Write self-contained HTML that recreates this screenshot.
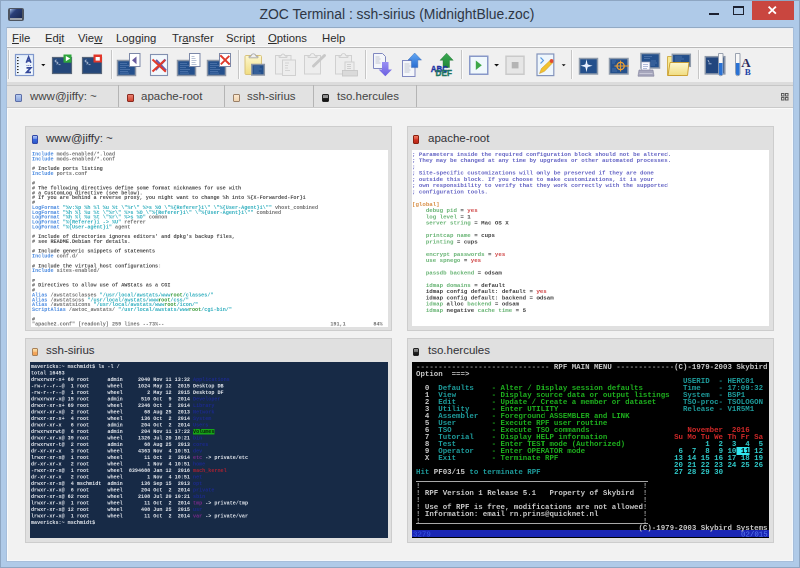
<!DOCTYPE html>
<html><head><meta charset="utf-8">
<style>
*{box-sizing:border-box}
html,body{margin:0;padding:0}
body{width:800px;height:568px;position:relative;overflow:hidden;background:#afcae8;font-family:"Liberation Sans",sans-serif}
.a{position:absolute}
.title{left:259.5px;top:4px;white-space:nowrap;font-size:13.92px;color:#2e3644;line-height:20px}
.menu span{position:absolute;top:30.5px;font-size:11.3px;line-height:14px;color:#2c2c2c}
.menu u{text-decoration:underline;text-underline-offset:1px;text-decoration-thickness:1px}
.sep{position:absolute;top:51px;width:1px;height:27px;background:#c8c8c8;border-right:1px solid #fafafa}
.tab{position:absolute;top:85px;height:22px;border-right:1px solid #b4b4b4}
.tab span{position:absolute;top:4px;font-size:11.5px;line-height:14px;color:#444}
.tic{position:absolute;top:9px;width:6.5px;height:8px;border-radius:1px}
.panel{position:absolute;background:#e0e0e0;border:1px solid #cdcdcd}
.ptitle{position:absolute;font-size:11.5px;line-height:14px;color:#303036}
.term{position:absolute;overflow:hidden;font-family:"Liberation Mono",monospace;white-space:pre}
.term div{height:auto}
</style></head><body>
<!-- title bar -->
<div class="a" style="left:0;top:0;width:800px;height:568px;border:1px solid #8ea6c2"></div>
<div class="a" style="left:8px;top:7.5px;width:15.5px;height:13.5px;background:#4e5560;border-radius:2px"></div>
<div class="a" style="left:9.5px;top:9px;width:12.5px;height:8.5px;background:linear-gradient(135deg,#c8d8f0 0,#7890c0 12%,#2a3e78 35%,#1a2850 100%)"></div>
<div class="a" style="left:9.5px;top:17.5px;width:12.5px;height:2px;background:#a0a4ac"></div>
<div class="a title">ZOC Terminal : ssh-sirius (MidnightBlue.zoc)</div>
<div class="a" style="left:709px;top:13px;width:10px;height:2px;background:#1c2130"></div>
<div class="a" style="left:733px;top:6px;width:11px;height:9px;border:1px solid #1c2130;border-top-width:2px"></div>
<div class="a" style="left:752px;top:1px;width:42px;height:19px;background:#c9463f"></div>
<svg class="a" style="left:760px;top:0px" width="24" height="20" viewBox="760 0 24 20"><path d="M768.6 6.6 L775.9 13.6 M775.9 6.6 L768.6 13.6" stroke="#fff" stroke-width="1.9"/></svg>

<!-- client -->
<div class="a" style="left:6px;top:27px;width:788px;height:535px;border:1px solid #a6bedb"></div><div class="a" style="left:7px;top:27px;width:786px;height:1px;background:#92aac4"></div>
<div class="a" style="left:7px;top:28px;width:786px;height:533px;background:#f2f2f2"></div>
<div class="a" style="left:792px;top:28px;width:1px;height:533px;background:#f4f8fc"></div>
<div class="a" style="left:7px;top:560px;width:786px;height:1px;background:#f4f8fc"></div>
<div class="a" style="left:7px;top:108px;width:1px;height:453px;background:#fafbfc"></div>
<div class="a" style="left:7px;top:28px;width:786px;height:19px;background:#f0f0f0"></div>
<div class="a" style="left:7px;top:28px;width:786px;height:1px;background:#eaeef4"></div>
<!-- menu -->
<div class="menu">
<span style="left:12px"><u>F</u>ile</span>
<span style="left:45px">Ed<u>i</u>t</span>
<span style="left:78px">Vie<u>w</u></span>
<span style="left:116px">Lo<u>g</u>ging</span>
<span style="left:172px">Tr<u>a</u>nsfer</span>
<span style="left:226px">Scrip<u>t</u></span>
<span style="left:268px"><u>O</u>ptions</span>
<span style="left:322px">Help</span>
</div>
<div class="a" style="left:7px;top:46px;width:786px;height:1px;background:#fafafa"></div>
<div class="a" style="left:7px;top:47px;width:786px;height:1px;background:#b8b8b8"></div>
<!-- toolbar -->
<div class="a" style="left:7px;top:48px;width:786px;height:34px;background:#f0f0f0"></div>
<div class="a" style="left:7px;top:81.5px;width:786px;height:3.5px;background:#dcdcdc"></div>
<svg class="a" style="left:0;top:0" width="800" height="84" viewBox="0 0 800 84">
<defs>
<linearGradient id="gy" x1="0" y1="0" x2="0" y2="1"><stop offset="0" stop-color="#fdf8d0"/><stop offset="1" stop-color="#f0dc80"/></linearGradient>
<linearGradient id="gb" x1="0" y1="0" x2="0" y2="1"><stop offset="0" stop-color="#62a8f4"/><stop offset="1" stop-color="#2a6cd0"/></linearGradient>
<linearGradient id="gp" x1="0" y1="0" x2="0" y2="1"><stop offset="0" stop-color="#9a90f4"/><stop offset="1" stop-color="#6a5ee0"/></linearGradient>
<linearGradient id="gg" x1="0" y1="0" x2="0" y2="1"><stop offset="0" stop-color="#3aa850"/><stop offset="1" stop-color="#22883a"/></linearGradient>
<linearGradient id="gl" x1="0" y1="0" x2="0" y2="1"><stop offset="0" stop-color="#e4eefa"/><stop offset="1" stop-color="#f6fbff"/></linearGradient>
<g id="term"><rect x="0" y="0" width="18" height="15.5" fill="#24508c" stroke="#8a94a4" stroke-width="1.5"/></g>
</defs>
<!-- grip -->
<rect x="8" y="50" width="1" height="29" fill="#c6c6c6"/><rect x="9" y="50" width="1" height="29" fill="#fbfbfb"/>
<!-- 1 A-Z -->
<rect x="15.5" y="54.5" width="18" height="21" fill="url(#gl)" stroke="#8098cc" stroke-width="1.2"/>
<g fill="#2a2a2a"><rect x="17" y="57" width="1.6" height="1.1"/><rect x="17" y="60" width="1.6" height="1.1"/><rect x="17" y="63" width="1.6" height="1.1"/><rect x="17" y="66" width="1.6" height="1.1"/><rect x="17" y="69" width="1.6" height="1.1"/><rect x="17" y="72" width="1.6" height="1.1"/></g>
<path d="M26.3 62.8 L28.6 57 L30.9 62.8 M27.2 60.8 H30" stroke="#33489a" stroke-width="1.7" fill="none"/>
<g fill="#6a7ab8"><rect x="26.5" y="65" width="1" height="1"/><rect x="28.2" y="65" width="1" height="1"/><rect x="29.9" y="65" width="1" height="1"/></g>
<path d="M26.5 67.8 H30.8 L26.6 72.4 H31" stroke="#33489a" stroke-width="1.7" fill="none"/>
<path d="M41.2 64 H45.4 L43.3 66.2 Z" fill="#111"/>
<!-- 2 terminal + play -->
<rect x="52.5" y="57.5" width="19" height="16" fill="#24477a" stroke="#56657a" stroke-width="1.2"/>
<path d="M56.5 60 q-1.5 0 -1.5 1 q0 1 1.5 1 q1.5 0 1.5 1 q0 1 -1.5 1" stroke="#d8e0f0" stroke-width="0.8" fill="none"/>
<path d="M58.5 64.6 h2" stroke="#c8d4e8" stroke-width="0.7"/>
<rect x="63.5" y="54.5" width="8" height="8.2" fill="#2fa63c"/>
<path d="M65.8 56 L70.2 58.6 L65.8 61.2 Z" fill="#fff"/>
<!-- 3 terminal + stop -->
<rect x="82.5" y="57.5" width="19" height="16" fill="#24477a" stroke="#56657a" stroke-width="1.2"/>
<path d="M86.5 60 q-1.5 0 -1.5 1 q0 1 1.5 1 q1.5 0 1.5 1 q0 1 -1.5 1" stroke="#d8e0f0" stroke-width="0.8" fill="none"/>
<path d="M88.5 64.6 h2" stroke="#c8d4e8" stroke-width="0.7"/>
<rect x="93.5" y="54.5" width="8.5" height="8" fill="#e2372a"/>
<rect x="95.6" y="57" width="4.2" height="3.6" fill="#fff"/>
<rect x="111" y="50" width="1" height="29" fill="#c6c6c6"/><rect x="112" y="50" width="1" height="29" fill="#fbfbfb"/>
<!-- 4 -->
<rect x="117.5" y="60.5" width="18" height="15" fill="#24508c" stroke="#8a94a4" stroke-width="1.5"/>
<path d="M120 63.5 h7 M120 65.5 h9 M120 67.5 h6 M120 69.5 h10 M120 71.5 h8 M120 73.2 h9" stroke="#6a8cc0" stroke-width="0.5"/>
<rect x="129.5" y="53.5" width="10.5" height="13" fill="#fff" stroke="#7c88a8" stroke-width="1"/>
<path d="M132 60.3 L136.5 56.5 V64.2 Z" fill="#675a9e"/>
<!-- 5 -->
<rect x="150.5" y="54.5" width="17" height="21" fill="#f3f8fc" stroke="#8290b0" stroke-width="1.1"/>
<path d="M155.5 70 L165.5 59.5 M156 60 L166 70.5" stroke="#6b5aa8" stroke-width="2.2"/>
<path d="M152.5 59.5 L165.8 71.8 M152.5 71.5 L165 60" stroke="#e23a2a" stroke-width="2"/>
<!-- 6 -->
<rect x="177.5" y="60.5" width="18" height="15" fill="#24508c" stroke="#8a94a4" stroke-width="1.5"/>
<path d="M180 63.5 h7 M180 65.5 h9 M180 67.5 h6 M180 69.5 h10 M180 71.5 h8 M180 73.2 h9" stroke="#6a8cc0" stroke-width="0.5"/>
<rect x="189.5" y="53.5" width="10.5" height="13" fill="#fff" stroke="#7c88a8" stroke-width="1"/>
<path d="M191.5 56.5 h3 M191.5 58.5 h4 M191.5 60.5 h5 M191.5 62.5 h4 M191.5 64.5 h5" stroke="#8a9ab8" stroke-width="0.6"/>
<!-- 7 -->
<rect x="207.5" y="60.5" width="18" height="15" fill="#24508c" stroke="#8a94a4" stroke-width="1.5"/>
<path d="M210 63.5 h7 M210 65.5 h9 M210 67.5 h6 M210 69.5 h10 M210 71.5 h8 M210 73.2 h9" stroke="#6a8cc0" stroke-width="0.5"/>
<rect x="219.5" y="53.5" width="11" height="13" fill="#fff" stroke="#7c88a8" stroke-width="1"/>
<path d="M220.3 55.3 L229.7 64.5 M220.8 64.3 L229.3 55.8" stroke="#df3a2c" stroke-width="1.9"/>
<rect x="238" y="50" width="1" height="29" fill="#c6c6c6"/><rect x="239" y="50" width="1" height="29" fill="#fbfbfb"/>
<!-- 8 clipboard -->
<rect x="245" y="55.5" width="16.5" height="19" rx="1" fill="url(#gy)" stroke="#d8c27a" stroke-width="1"/>
<path d="M249 57.8 h9 v-1.5 h-2 a1.8 1.8 0 0 0 -5 0 h-2 Z" fill="#f0f0f0" stroke="#9a9a9a" stroke-width="0.8"/>
<rect x="251.8" y="64.5" width="12.5" height="10.5" fill="#24508c" stroke="#8a94a4" stroke-width="1.5"/>
<path d="M253.8 67 h6 M253.8 69 h8 M253.8 71 h5 M253.8 73 h7" stroke="#6a8cc0" stroke-width="0.5"/>
<!-- 9 gray -->
<g fill="#ededed" stroke="#d0d0d0" stroke-width="1">
<rect x="275.5" y="55.5" width="15.5" height="18.5"/>
<path d="M279 57.5 h8 v-1.5 h-2 a1.8 1.8 0 0 0 -4 0 h-2 Z"/>
<rect x="282.5" y="60" width="13" height="15.5"/>
</g>
<path d="M285 63 h4 M285 65.5 h3 M285 68 h3 M285 70.5 h5" stroke="#c8c8c8" stroke-width="0.7"/>
<!-- 10 gray pencil -->
<g fill="#ededed" stroke="#d0d0d0" stroke-width="1">
<rect x="304.5" y="55.5" width="16" height="18.5"/>
<path d="M308 57.5 h9 v-1.5 h-2 a1.8 1.8 0 0 0 -5 0 h-2 Z"/>
</g>
<path d="M313.5 66 L324.5 55.5" stroke="#c8c8c8" stroke-width="3" stroke-linecap="round"/>
<!-- 11 gray printer -->
<g fill="#ededed" stroke="#d0d0d0" stroke-width="1">
<rect x="335.5" y="55.5" width="16" height="18.5"/>
<path d="M339 57.5 h9 v-1.5 h-2 a1.8 1.8 0 0 0 -5 0 h-2 Z"/>
<rect x="345" y="62" width="9" height="9"/>
</g>
<rect x="342.5" y="70.5" width="15" height="5.5" fill="#dadada" stroke="#c4c4c4" stroke-width="0.8"/>
<path d="M347 64.5 h4 M347 66.5 h4 M347 68.5 h4" stroke="#c0c0c0" stroke-width="0.7"/>
<rect x="365" y="50" width="1" height="29" fill="#c6c6c6"/><rect x="366" y="50" width="1" height="29" fill="#fbfbfb"/>
<!-- 12 doc + down arrow -->
<path d="M373.5 53.5 H382.5 L385.5 56.5 V68.5 H373.5 Z" fill="#f4f6fa" stroke="#8088c0" stroke-width="1"/>
<path d="M375.5 57 h4 M375.5 59 h5 M375.5 61 h4 M375.5 63 h5" stroke="#b8bcc8" stroke-width="0.8"/>
<path d="M382 62 H388.5 V69.5 H392 L385.3 76.3 L378.6 69.5 H382 Z" fill="url(#gp)"/>
<!-- 13 doc + up arrow -->
<rect x="402.5" y="60.5" width="12.5" height="16" fill="#f4f6fa" stroke="#8088c0" stroke-width="1"/>
<path d="M404.5 64 h5 M404.5 66 h6 M404.5 68 h5 M404.5 70 h6 M404.5 72 h5" stroke="#b8bcc8" stroke-width="0.8"/>
<path d="M411.4 67.6 H417.8 V60.1 H421.5 L414.7 53 L408 60.1 H411.4 Z" fill="url(#gb)" stroke="#2a5aa8" stroke-width="0.4"/>
<!-- 14 ABC DEF -->
<path d="M443 67.5 H449.5 V60.3 H453.2 L446.6 53.2 L440 60.3 H443 Z" fill="url(#gg)" stroke="#1e6e30" stroke-width="0.4"/>
<text x="430.8" y="71.8" font-family="Liberation Sans" font-weight="bold" font-size="9" fill="#2032a2" stroke="#2032a2" stroke-width="0.35" textLength="17" lengthAdjust="spacingAndGlyphs">ABC</text>
<text x="435.6" y="76.4" font-family="Liberation Sans" font-weight="bold" font-size="8.2" fill="#1c7460" stroke="#1c7460" stroke-width="0.35" textLength="16.3" lengthAdjust="spacingAndGlyphs">DEF</text>
<rect x="461" y="50" width="1" height="29" fill="#c6c6c6"/><rect x="462" y="50" width="1" height="29" fill="#fbfbfb"/>
<!-- 15 play -->
<rect x="469.75" y="56.25" width="18" height="18" fill="#f0f8fc" stroke="#8898c8" stroke-width="1.5"/>
<path d="M475.8 60.5 L481.8 65.2 L475.8 69.9 Z" fill="#3ea848"/>
<path d="M494.2 64 H499 L496.6 66.5 Z" fill="#111"/>
<!-- 16 stop gray -->
<rect x="506" y="56.25" width="18" height="18" fill="#e6e6e6" stroke="#cacaca" stroke-width="1.5"/>
<rect x="511.75" y="62" width="6.75" height="6.4" fill="#b4b4b4"/>
<!-- 17 pencil doc -->
<rect x="537" y="54" width="16.8" height="21.6" fill="#eef6fc" stroke="#8494bc" stroke-width="1.2"/>
<path d="M540.5 57.5 L543.5 60.5 L540.5 63.5" stroke="#5a9ae0" stroke-width="1.1" fill="none"/>
<path d="M539.5 73.5 L541.5 68.5 L550.5 60 L553 62.5 L544.5 71.3 Z" fill="#f2c22e" stroke="#c89020" stroke-width="0.5"/>
<circle cx="551.6" cy="61" r="1.9" fill="#e04a30"/>
<path d="M561.7 64.3 H565.7 L563.7 66.3 Z" fill="#111"/>
<rect x="571" y="50" width="1" height="29" fill="#c6c6c6"/><rect x="572" y="50" width="1" height="29" fill="#fbfbfb"/>
<!-- 18 star -->
<rect x="579.5" y="58.5" width="18" height="15.5" fill="#24508c" stroke="#8e9aaa" stroke-width="1.5"/>
<path d="M586.5 59.3 L587.6 64.6 L592.6 65.8 L587.6 67 L586.5 72.2 L585.4 67 L580.5 65.8 L585.4 64.6 Z" fill="#f4f8ff"/>
<circle cx="586.5" cy="65.8" r="2" fill="#dfe8ff" opacity="0.7"/>
<!-- 19 target -->
<rect x="609.5" y="58.5" width="18.5" height="15.5" fill="#24508c" stroke="#8e9aaa" stroke-width="1.5"/>
<path d="M612 61 h4 M612 63 h3 M612 69 h4 M612 71 h5" stroke="#6a8cc0" stroke-width="0.5"/>
<circle cx="620.6" cy="66" r="3.6" fill="none" stroke="#f0a030" stroke-width="1.3"/>
<path d="M614.5 66 H629 M620.6 60.5 V71.5" stroke="#f0a030" stroke-width="1"/>
<!-- 20 printer -->
<rect x="641" y="53.5" width="18.5" height="14.5" fill="#24508c" stroke="#8e9aaa" stroke-width="1.5"/>
<path d="M644 56.5 h8 M644 58.5 h6 M651 61 h5 M651 63 h6 M651 65 h4" stroke="#6a8cc0" stroke-width="0.5"/>
<rect x="641.3" y="62" width="8.6" height="9" fill="#f8f8ff" stroke="#9aa0b8" stroke-width="0.7"/>
<path d="M643 64.5 h5 M643 66.5 h5 M643 68.5 h4" stroke="#8090c0" stroke-width="0.6"/>
<path d="M639 70 H653 L654 76.2 H638 Z" fill="#a6a6bc" stroke="#80809a" stroke-width="0.6"/>
<rect x="639.5" y="73" width="13" height="1" fill="#c8c8d8"/>
<!-- 21 folder -->
<path d="M667.5 56.5 H671.5 L672.5 57.5 H681 V75.5 H667.5 Z" fill="#f8e890" stroke="#c8a030" stroke-width="0.8"/>
<rect x="672.3" y="54.3" width="18" height="12" fill="#24508c" stroke="#8e9aaa" stroke-width="1.5"/>
<path d="M675 57 h7 M675 59 h9 M675 61 h6 M675 63 h8" stroke="#6a8cc0" stroke-width="0.5"/>
<path d="M670 62.5 H689 L687.5 75.5 H668 Z" fill="url(#gy)" stroke="#c89a28" stroke-width="0.9"/>
<rect x="698" y="50" width="1" height="29" fill="#c6c6c6"/><rect x="699" y="50" width="1" height="29" fill="#fbfbfb"/>
<!-- 22 terminal tube -->
<rect x="705.3" y="56.7" width="19.5" height="17.2" fill="#22467e" stroke="#8a96a8" stroke-width="1.5"/>
<path d="M708 60 l1.2 2.5 M708.5 63.8 h3" stroke="#c8d4e8" stroke-width="0.8"/>
<path d="M718.5 53.5 H723 V73.5 A2.25 2.25 0 0 1 718.5 73.5 Z" fill="#f8f8f8" stroke="#9098a8" stroke-width="0.9"/>
<path d="M718.9 63 H722.6 V73.5 A1.85 1.85 0 0 1 718.9 73.5 Z" fill="#2a72d4"/>
<!-- 23 tube AB -->
<path d="M735.5 53.5 H740 V73.5 A2.25 2.25 0 0 1 735.5 73.5 Z" fill="#f8f8f8" stroke="#9098a8" stroke-width="0.9"/>
<path d="M735.9 63 H739.6 V73.5 A1.85 1.85 0 0 1 735.9 73.5 Z" fill="#2a72d4"/>
<text x="741.2" y="67.3" font-family="Liberation Serif" font-weight="bold" font-size="13" fill="#2a2a5c">A</text>
<text x="744.8" y="75.3" font-family="Liberation Serif" font-weight="bold" font-size="9" fill="#2244a8">B</text>
</svg>


<!-- tab bar -->
<div class="a" style="left:7px;top:85px;width:786px;height:23px;background:#e2e2e2;border-top:1px solid #c6c6c6;border-bottom:1px solid #cacaca"></div><div class="a" style="left:7px;top:108px;width:786px;height:1px;background:#fafafa"></div>
<div class="tab" style="left:7px;width:112px"><div class="tic" style="left:8px;background:linear-gradient(#b8cdf0,#8aa4dc);border:1px solid #5d6ea8"></div><span style="left:23px">www@jiffy: ~</span></div>
<div class="tab" style="left:119px;width:106px"><div class="tic" style="left:8px;background:linear-gradient(#e88070,#d04430);border:1px solid #8a2a20"></div><span style="left:22px">apache-root</span></div>
<div class="tab" style="left:225px;width:89px"><div class="tic" style="left:8px;background:linear-gradient(#fbe8d0,#f0d4b0);border:1px solid #9a8068"></div><span style="left:22px">ssh-sirius</span></div>
<div class="tab" style="left:314px;width:103px"><div class="tic" style="left:8px;background:linear-gradient(#888 0,#999 45%,#222 50%,#111);border:1px solid #222"></div><span style="left:23px">tso.hercules</span></div>
<svg class="a" style="left:780px;top:92px" width="10" height="10" viewBox="780 92 10 10"><g fill="none" stroke="#5a5a5a" stroke-width="1"><rect x="781.5" y="93.5" width="2.5" height="2.5"/><rect x="785.5" y="93.5" width="2.5" height="2.5"/><rect x="781.5" y="97.5" width="2.5" height="2.5"/><rect x="785.5" y="97.5" width="2.5" height="2.5"/></g></svg>

<!-- panels -->
<div class="panel" style="left:25px;top:126px;width:367px;height:205px"></div>
<div class="panel" style="left:407px;top:126px;width:367px;height:205px"></div>
<div class="panel" style="left:25px;top:338px;width:367px;height:205px"></div>
<div class="panel" style="left:407px;top:338px;width:367px;height:205px"></div>
<div class="a" style="left:31.5px;top:135.3px;width:6.5px;height:8.7px;background:linear-gradient(#b0c8f4 0,#7898ec 35%,#3a68e0 50%,#2a58c8 100%);border:0.8px solid #3248a8;border-radius:1px"></div>
<div class="ptitle" style="left:46px;top:131px">www@jiffy: ~</div>
<div class="a" style="left:412.8px;top:135.3px;width:6.2px;height:8.7px;background:linear-gradient(#f07a60 0,#e05040 40%,#d03020 55%,#b82818 100%);border:0.8px solid #8a2010;border-radius:1px"></div>
<div class="ptitle" style="left:428px;top:131px">apache-root</div>
<div class="a" style="left:31.5px;top:347.5px;width:6.5px;height:8.5px;background:linear-gradient(#fce0a8 0,#f8c888 40%,#f4a860 55%,#f0a050 100%);border:0.8px solid #a88058;border-radius:1px"></div>
<div class="ptitle" style="left:46px;top:343px">ssh-sirius</div>
<div class="a" style="left:413px;top:347.5px;width:6px;height:8.5px;background:linear-gradient(#909090 0,#6a6a6a 45%,#222 55%,#111 100%);border:0.8px solid #222;border-radius:1px"></div>
<div class="ptitle" style="left:428px;top:343px">tso.hercules</div>

<div class="term" style="left:31px;top:150px;width:357px;height:176.5px;background:#fff"><div style="position:absolute;transform:scale(0.5);transform-origin:0 0;will-change:transform;left:0.7px;top:1.3px;font-size:10.26px;font-weight:bold"><div style="height:9.720px"><span style="color:#4a8ae0">Include</span><span style="color:#707070"> mods-enabled/*.load</span></div><div style="height:9.720px"><span style="color:#4a8ae0">Include</span><span style="color:#707070"> mods-enabled/*.conf</span></div><div style="height:9.720px"> </div><div style="height:9.720px"><span style="color:#4a4a4a"># Include ports listing</span></div><div style="height:9.720px"><span style="color:#4a8ae0">Include</span><span style="color:#707070"> ports.conf</span></div><div style="height:9.720px"> </div><div style="height:9.720px"><span style="color:#4a4a4a">#</span></div><div style="height:9.720px"><span style="color:#4a4a4a"># The following directives define some format nicknames for use with</span></div><div style="height:9.720px"><span style="color:#4a4a4a"># a CustomLog directive (see below).</span></div><div style="height:9.720px"><span style="color:#4a4a4a"># If you are behind a reverse proxy, you might want to change %h into %{X-Forwarded-For}i</span></div><div style="height:9.720px"><span style="color:#4a4a4a">#</span></div><div style="height:9.720px"><span style="color:#4a8ae0">LogFormat</span><span style="color:#707070"> </span><span style="color:#30aebe">&quot;%v:%p %h %l %u %t \&quot;%r\&quot; %&gt;s %O \&quot;%{Referer}i\&quot; \&quot;%{User-Agent}i\&quot;&quot;</span><span style="color:#707070"> vhost_combined</span></div><div style="height:9.720px"><span style="color:#4a8ae0">LogFormat</span><span style="color:#707070"> </span><span style="color:#30aebe">&quot;%h %l %u %t \&quot;%r\&quot; %&gt;s %O \&quot;%{Referer}i\&quot; \&quot;%{User-Agent}i\&quot;&quot;</span><span style="color:#707070"> combined</span></div><div style="height:9.720px"><span style="color:#4a8ae0">LogFormat</span><span style="color:#707070"> </span><span style="color:#30aebe">&quot;%h %l %u %t \&quot;%r\&quot; %&gt;s %O&quot;</span><span style="color:#707070"> common</span></div><div style="height:9.720px"><span style="color:#4a8ae0">LogFormat</span><span style="color:#707070"> </span><span style="color:#30aebe">&quot;%{Referer}i -&gt; %U&quot;</span><span style="color:#707070"> referer</span></div><div style="height:9.720px"><span style="color:#4a8ae0">LogFormat</span><span style="color:#707070"> </span><span style="color:#30aebe">&quot;%{User-agent}i&quot;</span><span style="color:#707070"> agent</span></div><div style="height:9.720px"> </div><div style="height:9.720px"><span style="color:#4a4a4a"># Include of directories ignores editors&#x27; and dpkg&#x27;s backup files,</span></div><div style="height:9.720px"><span style="color:#4a4a4a"># see README.Debian for details.</span></div><div style="height:9.720px"> </div><div style="height:9.720px"><span style="color:#4a4a4a"># Include generic snippets of statements</span></div><div style="height:9.720px"><span style="color:#4a8ae0">Include</span><span style="color:#707070"> conf.d/</span></div><div style="height:9.720px"> </div><div style="height:9.720px"><span style="color:#4a4a4a"># Include the virtual host configurations:</span></div><div style="height:9.720px"><span style="color:#4a8ae0">Include</span><span style="color:#707070"> sites-enabled/</span></div><div style="height:9.720px"> </div><div style="height:9.720px"><span style="color:#4a4a4a">#</span></div><div style="height:9.720px"><span style="color:#4a4a4a"># Directives to allow use of AWStats as a CGI</span></div><div style="height:9.720px"><span style="color:#4a4a4a">#</span></div><div style="height:9.720px"><span style="color:#4a8ae0">Alias</span><span style="color:#707070"> /awstatsclasses </span><span style="color:#30aebe">&quot;/usr/local/awstats/www</span><span style="color:#3a9a3a">root</span><span style="color:#30aebe">/classes/&quot;</span></div><div style="height:9.720px"><span style="color:#4a8ae0">Alias</span><span style="color:#707070"> /awstatscss </span><span style="color:#30aebe">&quot;/usr/local/awstats/www</span><span style="color:#3a9a3a">root</span><span style="color:#30aebe">/css/&quot;</span></div><div style="height:9.720px"><span style="color:#4a8ae0">Alias</span><span style="color:#707070"> /awstatsicons </span><span style="color:#30aebe">&quot;/usr/local/awstats/www</span><span style="color:#3a9a3a">root</span><span style="color:#30aebe">/icon/&quot;</span></div><div style="height:9.720px"><span style="color:#4a8ae0">ScriptAlias</span><span style="color:#707070"> /awtoc_awstats/ </span><span style="color:#30aebe">&quot;/usr/local/awstats/www</span><span style="color:#3a9a3a">root</span><span style="color:#30aebe">/cgi-bin/&quot;</span></div><div style="height:9.720px"> </div><div style="height:9.720px"><span style="color:#4a4a4a">#</span></div><div style="height:9.720px"><span style="color:#707070">&quot;apache2.conf&quot; [readonly] 259 lines --73%--                                                      191,1         84%</span></div></div></div>
<div class="term" style="left:412px;top:150px;width:356.5px;height:176.3px;background:#fff"><div style="position:absolute;transform:scale(0.5);transform-origin:0 0;will-change:transform;left:0px;top:0.5px;font-size:11.52px;font-weight:bold"><div style="height:12.480px"><span style="color:#6464c4">; Parameters inside the required configuration block should not be altered.</span></div><div style="height:12.480px"><span style="color:#6464c4">; They may be changed at any time by upgrades or other automated processes.</span></div><div style="height:12.480px"><span style="color:#6464c4">;</span></div><div style="height:12.480px"><span style="color:#6464c4">; Site-specific customizations will only be preserved if they are done</span></div><div style="height:12.480px"><span style="color:#6464c4">; outside this block. If you choose to make customizations, it is your</span></div><div style="height:12.480px"><span style="color:#6464c4">; own responsibility to verify that they work correctly with the supported</span></div><div style="height:12.480px"><span style="color:#6464c4">; configuration tools.</span></div><div style="height:12.480px"> </div><div style="height:12.480px"><span style="color:#d89048">[global]</span></div><div style="height:12.480px"><span style="color:#68b474">    debug pid</span><span style="color:#404040"> = </span><span style="color:#d04848">yes</span></div><div style="height:12.480px"><span style="color:#68b474">    log level</span><span style="color:#404040"> = 1</span></div><div style="height:12.480px"><span style="color:#68b474">    server string</span><span style="color:#404040"> = Mac OS X</span></div><div style="height:12.480px"> </div><div style="height:12.480px"><span style="color:#68b474">    printcap name</span><span style="color:#404040"> = cups</span></div><div style="height:12.480px"><span style="color:#68b474">    printing</span><span style="color:#404040"> = cups</span></div><div style="height:12.480px"> </div><div style="height:12.480px"><span style="color:#68b474">    encrypt passwords</span><span style="color:#404040"> = </span><span style="color:#d04848">yes</span></div><div style="height:12.480px"><span style="color:#68b474">    use spnego</span><span style="color:#404040"> = </span><span style="color:#d04848">yes</span></div><div style="height:12.480px"> </div><div style="height:12.480px"><span style="color:#68b474">    passdb backend</span><span style="color:#404040"> = odsam</span></div><div style="height:12.480px"> </div><div style="height:12.480px"><span style="color:#68b474">    idmap domains</span><span style="color:#404040"> = default</span></div><div style="height:12.480px"><span style="color:#404040">    idmap config default: default = </span><span style="color:#d04848">yes</span></div><div style="height:12.480px"><span style="color:#404040">    idmap config default: backend = odsam</span></div><div style="height:12.480px"><span style="color:#68b474">    idmap</span><span style="color:#404040"> alloc </span><span style="color:#68b474">backend</span><span style="color:#404040"> = odsam</span></div><div style="height:12.480px"><span style="color:#68b474">    idmap</span><span style="color:#404040"> negative </span><span style="color:#68b474">cache time</span><span style="color:#404040"> = 5</span></div></div></div>
<div class="term" style="left:30px;top:362px;width:358px;height:176px;background:#172a46"><div style="position:absolute;transform:scale(0.5);transform-origin:0 0;will-change:transform;left:0.8px;top:2.2px;font-size:10.2px;font-weight:bold"><div style="height:13.000px"><span style="color:#dfe3ea">mavericks:~ mschmidt$ ls -l /</span></div><div style="height:13.000px"><span style="color:#dfe3ea">total 16453</span></div><div style="height:13.000px"><span style="color:#dfe3ea">drwxrwxr-x+ 60 root      admin     2040 Nov 11 13:32 </span><span style="color:#1c2a8c">Applications</span></div><div style="height:13.000px"><span style="color:#dfe3ea">-rw-r--r--@  1 root      wheel     1024 May 12  2015 </span><span style="color:#dfe3ea">Desktop DB</span></div><div style="height:13.000px"><span style="color:#dfe3ea">-rw-r--r--@  1 root      wheel        2 May 12  2015 </span><span style="color:#dfe3ea">Desktop DF</span></div><div style="height:13.000px"><span style="color:#dfe3ea">drwxrwxr-x@ 15 root      admin      510 Oct  9  2014 </span><span style="color:#1c2a8c">Developer</span></div><div style="height:13.000px"><span style="color:#dfe3ea">drwxr-xr-x+ 69 root      wheel     2346 Oct  2  2014 </span><span style="color:#1c2a8c">Library</span></div><div style="height:13.000px"><span style="color:#dfe3ea">drwxr-xr-x@  2 root      wheel       68 Aug 25  2013 </span><span style="color:#1c2a8c">Network</span></div><div style="height:13.000px"><span style="color:#dfe3ea">drwxr-xr-x+  4 root      wheel      136 Oct  2  2014 </span><span style="color:#1c2a8c">System</span></div><div style="height:13.000px"><span style="color:#dfe3ea">drwxr-xr-x   6 root      admin      204 Oct  2  2014 </span><span style="color:#1c2a8c">Users</span></div><div style="height:13.000px"><span style="color:#dfe3ea">drwxrwxrwt@  6 root      admin      204 Nov 11 17:22 </span><span style="color:#0a200a;background:#16a616">Volumes</span></div><div style="height:13.000px"><span style="color:#dfe3ea">drwxr-xr-x@ 39 root      wheel     1326 Jul 20 10:21 </span><span style="color:#1c2a8c">bin</span></div><div style="height:13.000px"><span style="color:#dfe3ea">drwxrwxr-t@  2 root      admin       68 Aug 25  2013 </span><span style="color:#1c2a8c">cores</span></div><div style="height:13.000px"><span style="color:#dfe3ea">dr-xr-xr-x   3 root      wheel     4363 Nov  4 10:51 </span><span style="color:#1c2a8c">dev</span></div><div style="height:13.000px"><span style="color:#dfe3ea">lrwxr-xr-x@  1 root      wheel       11 Oct  2  2014 </span><span style="color:#7a2c8c">etc</span><span style="color:#dfe3ea"> -&gt; private/etc</span></div><div style="height:13.000px"><span style="color:#dfe3ea">dr-xr-xr-x   2 root      wheel        1 Nov  4 10:51 </span><span style="color:#1c2a8c">home</span></div><div style="height:13.000px"><span style="color:#dfe3ea">-rwxr-xr-x@  1 root      wheel  8394688 Jan 12  2016 </span><span style="color:#a82232">mach_kernel</span></div><div style="height:13.000px"><span style="color:#dfe3ea">dr-xr-xr-x   2 root      wheel        1 Nov  4 10:51 </span><span style="color:#1c2a8c">net</span></div><div style="height:13.000px"><span style="color:#dfe3ea">drwxr-xr-x@  4 mschmidt  admin      136 Sep 15  2013 </span><span style="color:#1c2a8c">opt</span></div><div style="height:13.000px"><span style="color:#dfe3ea">drwxr-xr-x@  6 root      wheel      204 Oct  2  2014 </span><span style="color:#1c2a8c">private</span></div><div style="height:13.000px"><span style="color:#dfe3ea">drwxr-xr-x@ 62 root      wheel     2108 Jul 20 10:21 </span><span style="color:#1c2a8c">sbin</span></div><div style="height:13.000px"><span style="color:#dfe3ea">lrwxr-xr-x@  1 root      wheel       11 Oct  2  2014 </span><span style="color:#7a2c8c">tmp</span><span style="color:#dfe3ea"> -&gt; private/tmp</span></div><div style="height:13.000px"><span style="color:#dfe3ea">drwxr-xr-x@ 12 root      wheel      408 Jun 25  2015 </span><span style="color:#1c2a8c">usr</span></div><div style="height:13.000px"><span style="color:#dfe3ea">lrwxr-xr-x@  1 root      wheel       11 Oct  2  2014 </span><span style="color:#7a2c8c">var</span><span style="color:#dfe3ea"> -&gt; private/var</span></div><div style="height:13.000px"><span style="color:#dfe3ea">mavericks:~ mschmidt$</span></div></div></div>
<div class="term" style="left:411.5px;top:362px;width:357.5px;height:176px;background:#000">
<div style="position:absolute;left:0;top:168.25px;width:358px;height:6.75px;background:#1a26b4"></div>
<div style="position:absolute;transform:scale(0.5);transform-origin:0 0;will-change:transform;left:4.5px;top:0.5px;font-size:14.84px;font-weight:bold"><div style="height:14.000px"><span style="color:#9a9a9a">------------------------------</span> <span style="color:#c8c8c8">RPF MAIN MENU</span> <span style="color:#9a9a9a">-------------</span><span style="color:#c8c8c8">(C)-1979-2003 Skybird</span></div><div style="height:14.000px"><span style="color:#c8c8c8">Option  ===&gt;</span></div><div style="height:14.000px">                                                            <span style="color:#1e9c9c">USERID  -</span> <span style="color:#1e9c9c">HERC01</span></div><div style="height:14.000px">  <span style="color:#c8c8c8">0</span>  <span style="color:#1e9c9c">Defaults</span>    <span style="color:#1eb01e">- Alter / Display session defaults</span>         <span style="color:#1e9c9c">Time    -</span> <span style="color:#1e9c9c">17:09:32</span></div><div style="height:14.000px">  <span style="color:#c8c8c8">1</span>  <span style="color:#1e9c9c">View</span>        <span style="color:#1eb01e">- Display source data or output listings</span>   <span style="color:#1e9c9c">System  -</span> <span style="color:#1e9c9c">BSP1</span></div><div style="height:14.000px">  <span style="color:#c8c8c8">2</span>  <span style="color:#1e9c9c">Edit</span>        <span style="color:#1eb01e">- Update / Create a member or dataset</span>      <span style="color:#1e9c9c">TSO-proc-</span> <span style="color:#1e9c9c">TSOLOGON</span></div><div style="height:14.000px">  <span style="color:#c8c8c8">3</span>  <span style="color:#1e9c9c">Utility</span>     <span style="color:#1eb01e">- Enter UTILITY</span>                            <span style="color:#1e9c9c">Release -</span> <span style="color:#1e9c9c">V1R5M1</span></div><div style="height:14.000px">  <span style="color:#c8c8c8">4</span>  <span style="color:#1e9c9c">Assembler</span>   <span style="color:#1eb01e">- Foreground ASSEMBLER and LINK</span></div><div style="height:14.000px">  <span style="color:#c8c8c8">5</span>  <span style="color:#1e9c9c">User</span>        <span style="color:#1eb01e">- Execute RPF user routine</span></div><div style="height:14.000px">  <span style="color:#c8c8c8">6</span>  <span style="color:#1e9c9c">TSO</span>         <span style="color:#1eb01e">- Execute TSO commands</span>                      <span style="color:#d02828">November</span>  <span style="color:#d02828">2016</span></div><div style="height:14.000px">  <span style="color:#c8c8c8">7</span>  <span style="color:#1e9c9c">Tutorial</span>    <span style="color:#1eb01e">- Display HELP information</span>               <span style="color:#d02828">Su Mo Tu We Th Fr Sa</span></div><div style="height:14.000px">  <span style="color:#c8c8c8">8</span>  <span style="color:#1e9c9c">Test</span>        <span style="color:#1eb01e">- Enter TEST mode (Authorized)</span>                 <span style="color:#30c8c8"> 1</span> <span style="color:#30c8c8"> 2</span> <span style="color:#30c8c8"> 3</span> <span style="color:#30c8c8"> 4</span> <span style="color:#30c8c8"> 5</span></div><div style="height:14.000px">  <span style="color:#c8c8c8">9</span>  <span style="color:#1e9c9c">Operator</span>    <span style="color:#1eb01e">- Enter OPERATOR mode</span>                    <span style="color:#30c8c8"> 6</span> <span style="color:#30c8c8"> 7</span> <span style="color:#30c8c8"> 8</span> <span style="color:#30c8c8"> 9</span> <span style="color:#30c8c8">10</span><span style="color:#000;background:#30e8f0"> 11</span> <span style="color:#30c8c8">12</span></div><div style="height:14.000px">  <span style="color:#c8c8c8">X</span>  <span style="color:#1e9c9c">Exit</span>        <span style="color:#1eb01e">- Terminate RPF</span>                          <span style="color:#30c8c8">13</span> <span style="color:#30c8c8">14</span> <span style="color:#30c8c8">15</span> <span style="color:#30c8c8">16</span> <span style="color:#30c8c8">17</span> <span style="color:#30c8c8">18</span> <span style="color:#30c8c8">19</span></div><div style="height:14.000px">                                                          <span style="color:#30c8c8">20</span> <span style="color:#30c8c8">21</span> <span style="color:#30c8c8">22</span> <span style="color:#30c8c8">23</span> <span style="color:#30c8c8">24</span> <span style="color:#30c8c8">25</span> <span style="color:#30c8c8">26</span></div><div style="height:14.000px"><span style="color:#1e9c9c">Hit</span> <span style="color:#c8c8c8">PF03/15</span> <span style="color:#1e9c9c">to terminate RPF</span>                              <span style="color:#30c8c8">27</span> <span style="color:#30c8c8">28</span> <span style="color:#30c8c8">29</span> <span style="color:#30c8c8">30</span></div><div style="height:14.000px"> </div><div style="height:14.000px"><span style="color:#9a9a9a">!</span>                                                  <span style="color:#9a9a9a">!</span></div><div style="height:14.000px"><span style="color:#9a9a9a">!</span> <span style="color:#c8c8c8">RPF Version 1 Release 5.1   Property of Skybird</span>  <span style="color:#9a9a9a">!</span></div><div style="height:14.000px"><span style="color:#9a9a9a">!</span>                                                  <span style="color:#9a9a9a">!</span></div><div style="height:14.000px"><span style="color:#9a9a9a">!</span> <span style="color:#c8c8c8">Use of RPF is free, modifications are not allowed</span><span style="color:#9a9a9a">!</span></div><div style="height:14.000px"><span style="color:#9a9a9a">!</span> <span style="color:#c8c8c8">Information: email rn.prins@quicknet.nl</span>          <span style="color:#9a9a9a">!</span></div><div style="height:14.000px"><span style="color:#9a9a9a">!</span>                                                  <span style="color:#9a9a9a">!</span></div><div style="height:14.000px">                                                  <span style="color:#c8c8c8">(C)-1979-2003 Skybird Systems</span></div><div style="height:14.000px"> </div></div>
<div style="position:absolute;left:4.5px;top:119px;width:232px;height:1px;background:#a8a8a8"></div>
<div style="position:absolute;left:4.5px;top:161px;width:232px;height:1px;background:#a8a8a8"></div>
<div style="position:absolute;transform:scale(0.5);transform-origin:0 0;will-change:transform;left:1.5px;top:168.5px;font-size:14.84px;line-height:14px;color:#3a5ae8">3279</div>
<div style="position:absolute;transform:scale(0.5);transform-origin:0 0;will-change:transform;left:329px;top:168.5px;font-size:14.84px;line-height:14px;color:#5a7af0">02/015</div>
</div>
</body></html>
